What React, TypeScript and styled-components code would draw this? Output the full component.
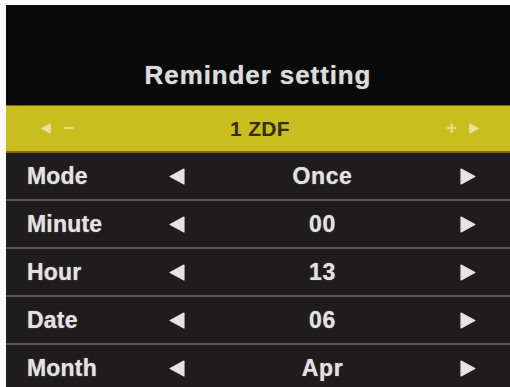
import styled, { createGlobalStyle } from "styled-components";

const GlobalStyle = createGlobalStyle`
  html, body {
    margin: 0;
    padding: 0;
    background: #fbfbfb;
    overflow: hidden;
  }
  body {
    font-family: "Liberation Sans", Arial, sans-serif;
  }
`;

const Screen = styled.div`
  width: 510px;
  height: 387px;
  padding: 5px 0 0 6px;
  box-sizing: border-box;
  overflow: hidden;
`;

const Panel = styled.div`
  background: #0b0a0a;
  height: 100%;
  display: flex;
  flex-direction: column;
`;

const Title = styled.h1`
  margin: 0;
  height: 100px;
  flex: none;
  display: flex;
  align-items: flex-end;
  justify-content: center;
  padding-bottom: 14px;
  box-sizing: border-box;
  font-size: 26px;
  font-weight: bold;
  letter-spacing: 0.9px;
  color: #dcdcdc;
  text-shadow: 0 0 1px rgba(220, 220, 220, 0.7);
`;

const ChannelBar = styled.div`
  height: 48px;
  flex: none;
  background: #c8bf1f;
  border-top: 1px solid #6a6410;
  border-bottom: 2px solid #8a6512;
  box-sizing: border-box;
  display: grid;
  grid-template-columns: 1fr auto 1fr;
  align-items: center;
  padding: 0 30px 0 34px;
`;

const BarSide = styled.div<{ $end?: boolean }>`
  display: flex;
  align-items: center;
  gap: 12px;
  justify-content: ${(p) => (p.$end ? "flex-end" : "flex-start")};
  color: #e9e7a8;
  opacity: 0.8;
  font-size: 18px;
  font-weight: bold;
`;

const Channel = styled.span`
  font-size: 21px;
  font-weight: bold;
  color: #3a2c10;
  letter-spacing: 0.3px;
`;

const Rows = styled.div`
  display: flex;
  flex-direction: column;
  gap: 2px;
  background: #575454;
  flex: 1;
`;

const Row = styled.div`
  height: 46px;
  flex: none;
  background: #1f1c1d;
  display: grid;
  grid-template-columns: 141px 17px 1fr 17px;
  align-items: center;
  padding: 0 33px 0 21px;
  color: #e3e1e3;
  font-size: 23px;
  font-weight: bold;
  text-shadow: 0 0 1px rgba(230, 230, 230, 0.7);
`;

const Label = styled.span`
  letter-spacing: 0.2px;
`;

const Value = styled.span`
  text-align: center;
  letter-spacing: 0.6px;
`;

const Arrow = ({ dir, size = 17, color = "#e6e4e6" }: { dir: "left" | "right"; size?: number; color?: string }) => (
  <svg width={size} height={size} viewBox="0 0 16 16" style={{ display: "block" }}>
    <path
      d={dir === "left" ? "M15 1 L15 15 L2 8 Z" : "M1 1 L1 15 L14 8 Z"}
      fill={color}
      stroke={color}
      strokeWidth="1.2"
      strokeLinejoin="round"
    />
  </svg>
);

const rows = [
  { label: "Mode", value: "Once" },
  { label: "Minute", value: "00" },
  { label: "Hour", value: "13" },
  { label: "Date", value: "06" },
  { label: "Month", value: "Apr" },
];

export default function App() {
  return (
    <>
      <GlobalStyle />
      <Screen>
        <Panel>
          <Title>Reminder setting</Title>
          <ChannelBar>
            <BarSide>
              <Arrow dir="left" size={11} color="#eeecc0" />
              <span>−</span>
            </BarSide>
            <Channel>1 ZDF</Channel>
            <BarSide $end>
              <span>+</span>
              <Arrow dir="right" size={11} color="#eeecc0" />
            </BarSide>
          </ChannelBar>
          <Rows>
            {rows.map((r) => (
              <Row key={r.label}>
                <Label>{r.label}</Label>
                <Arrow dir="left" />
                <Value>{r.value}</Value>
                <Arrow dir="right" />
              </Row>
            ))}
          </Rows>
        </Panel>
      </Screen>
    </>
  );
}
